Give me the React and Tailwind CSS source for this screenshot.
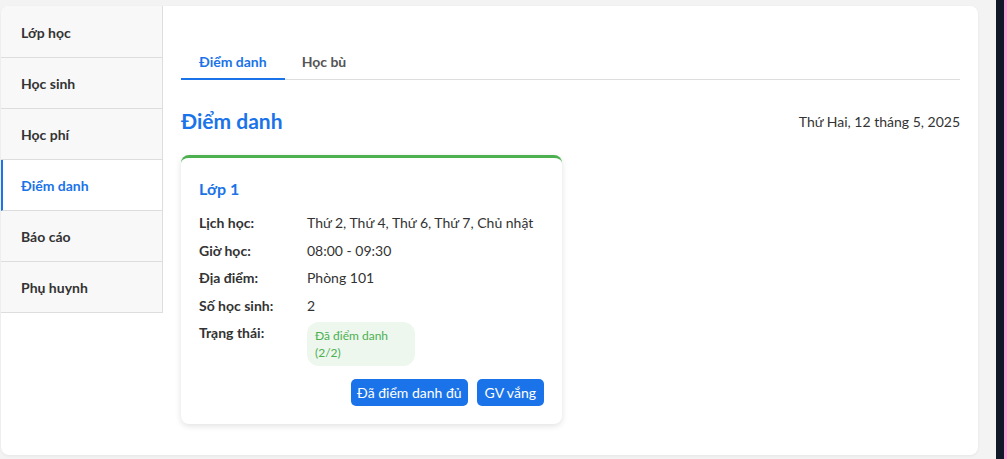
import React from 'react';

const MENU = ['Lớp học', 'Học sinh', 'Học phí', 'Điểm danh', 'Báo cáo', 'Phụ huynh'];

const ROWS = [
    ['Lịch học:', 'Thứ 2, Thứ 4, Thứ 6, Thứ 7, Chủ nhật'],
    ['Giờ học:', '08:00 - 09:30'],
    ['Địa điểm:', 'Phòng 101'],
    ['Số học sinh:', '2'],
];

export default function App() {
    return (
        <div className="flex h-[459px] w-full bg-[#f3f3f3] font-['Lato',sans-serif] text-[#333]">
            <div className="flex-1 pb-[4px] pl-[1px] pr-[18px] pt-[6px]">
                <div className="flex h-full overflow-hidden rounded-lg bg-white shadow-[0_1px_3px_rgba(0,0,0,0.06)]">
                    {/* sidebar */}
                    <nav className="w-[162px] shrink-0 self-start border-b border-r border-[#ddd] bg-[#f8f8f8] pt-px">
                        {MENU.map((item) => {
                            const active = item === 'Điểm danh';
                            return (
                                <div
                                    key={item}
                                    className={`flex h-[51px] items-center border-b border-[#ddd] text-[14px] font-bold last:h-[50px] last:border-b-0 ${
                                        active
                                            ? 'border-l-2 border-l-[#1a73e8] bg-white pl-[18px] text-[#1a73e8]'
                                            : 'pl-[20px] text-[#333]'
                                    }`}
                                >
                                    {item}
                                </div>
                            );
                        })}
                    </nav>

                    {/* content */}
                    <main className="flex-1 pl-[18px] pr-[18px] pt-[39px]">
                        <div className="flex border-b border-[#ddd]">
                            <div className="-mb-px border-b-2 border-[#1a73e8] px-[18px] pb-[6px] pt-[6px] text-[14px] font-bold text-[#1a73e8]">
                                Điểm danh
                            </div>
                            <div className="px-[17px] pb-[6px] pt-[6px] text-[14px] font-bold text-[#555]">
                                Học bù
                            </div>
                        </div>

                        <div className="mt-[27px] flex items-center justify-between">
                            <h2 className="text-[21px] font-bold leading-[28px] text-[#1a73e8]">Điểm danh</h2>
                            <span className="text-[14px] text-[#333]">Thứ Hai, 12 tháng 5, 2025</span>
                        </div>

                        <div className="mt-[20px] w-[381px] rounded-lg border-t-[3px] border-[#4caf50] bg-white px-[18px] pb-[18px] pt-[19px] shadow-[0_2px_6px_rgba(0,0,0,0.12)]">
                            <h3 className="text-[16px] font-bold text-[#1a73e8]">Lớp 1</h3>
                            <div className="mt-[11px] flex flex-col gap-[5.5px] text-[14px]">
                                {ROWS.map(([label, value]) => (
                                    <div key={label} className="flex leading-[22px]">
                                        <span className="w-[108px] shrink-0 font-bold">{label}</span>
                                        <span>{value}</span>
                                    </div>
                                ))}
                                <div className="flex leading-[22px]">
                                    <span className="w-[108px] shrink-0 font-bold">Trạng thái:</span>
                                    <span className="w-[108px] rounded-[12px] bg-[#edf7ee] px-[8px] py-[5px] text-[12px] leading-[17px] text-[#4caf50]">
                                        Đã điểm danh (2/2)
                                    </span>
                                </div>
                            </div>
                            <div className="mt-[13px] flex justify-end gap-[9px]">
                                <button className="h-[27px] rounded-[5px] bg-[#1a73e8] px-[6px] text-[14px] text-white">
                                    Đã điểm danh đủ
                                </button>
                                <button className="h-[27px] rounded-[5px] bg-[#1a73e8] px-[8px] text-[14px] text-white">
                                    GV vắng
                                </button>
                            </div>
                        </div>
                    </main>
                </div>
            </div>
            <div className="w-[8px] bg-[#111827]" />
            <div className="w-[3px] bg-pink-300" />
        </div>
    );
}
